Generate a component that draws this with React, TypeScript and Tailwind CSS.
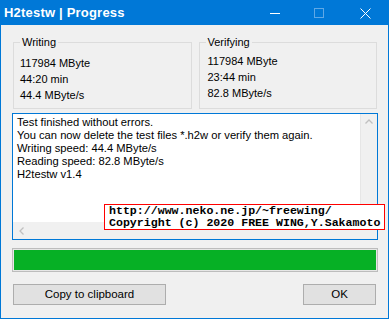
import React from "react";

const ui = { fontFamily: '"Liberation Sans", Arial, sans-serif' };
const mono = { fontFamily: '"Liberation Mono", "Courier New", monospace' };

function GroupBox({ title, lines, pad }: { title: string; lines: string[]; pad: string }) {
  return (
    <div className="relative h-[67px] w-[179px] border border-[#dcdcdc]">
      <span className="absolute left-[6px] top-[-8px] bg-[#f0f0f0] px-[2px] leading-[14px]">{title}</span>
      <div className={pad}>
        {lines.map((l) => (
          <div key={l} className="leading-[16px]">
            {l}
          </div>
        ))}
      </div>
    </div>
  );
}

export default function App() {
  return (
    <div
      className="relative flex h-[319px] w-[389px] flex-col border border-[#0078d7] bg-[#f0f0f0] text-[11px] text-black"
      style={ui}
    >
      {/* title bar */}
      <div className="flex h-[24px] shrink-0 items-center bg-[#0078d7] text-white">
        <span className="ml-[3px] text-[13px] font-bold tracking-[0.2px]">H2testw | Progress</span>
        <div className="ml-auto flex h-full items-center">
          <div className="flex h-full w-[46px] items-center justify-center pl-[4px]">
            <div className="h-px w-[10px] bg-white" />
          </div>
          <div className="flex h-full w-[46px] items-center justify-center">
            <div className="h-[10px] w-[10px] border border-[#5fa8e6]" />
          </div>
          <div className="flex h-full w-[46px] items-center justify-center">
            <svg width="11" height="11" viewBox="0 0 11 11">
              <path d="M0.5 0.5L10.5 10.5M10.5 0.5L0.5 10.5" stroke="white" strokeWidth="1" />
            </svg>
          </div>
        </div>
      </div>

      <div className="flex flex-col px-[11px]">
        {/* group boxes */}
        <div className="mt-[17px] flex gap-[7px] pl-px">
          <GroupBox title="Writing" pad="pl-[6px] pt-[12px]" lines={["117984 MByte", "44:20 min", "44.4 MByte/s"]} />
          <GroupBox title="Verifying" pad="pl-[8px] pt-[10px]" lines={["117984 MByte", "23:44 min", "82.8 MByte/s"]} />
        </div>

        {/* log box */}
        <div className="mt-[4px] flex h-[127px] w-[366px] flex-col border border-[#0078d7] bg-white">
          <div className="flex min-h-0 flex-1">
            <div className="flex-1 pl-[4px] pt-[2px] text-[11.2px] leading-[13px]">
              <div>Test finished without errors.</div>
              <div>You can now delete the test files *.h2w or verify them again.</div>
              <div>Writing speed: 44.4 MByte/s</div>
              <div>Reading speed: 82.8 MByte/s</div>
              <div>H2testw v1.4</div>
            </div>
            <div className="flex w-[17px] flex-col items-center border-l border-[#e6e6e6] bg-[#f0f0f0] pt-[5px]">
              <svg width="8" height="5" viewBox="0 0 8 5">
                <path d="M0.5 4.5L4 1L7.5 4.5" stroke="#c0c0c0" strokeWidth="1.3" fill="none" />
              </svg>
            </div>
          </div>
          <div className="flex h-[17px] items-center bg-[#f0f0f0]">
            <svg className="ml-[6px]" width="5" height="8" viewBox="0 0 5 8">
              <path d="M4.5 0.5L1 4L4.5 7.5" stroke="#c0c0c0" strokeWidth="1.3" fill="none" />
            </svg>
            <div className="ml-auto h-full w-[17px] bg-[#f0f0f0]" />
          </div>
        </div>

        {/* progress */}
        <div className="mt-[8px] h-[24px] w-[366px] border border-[#bcbcbc] bg-[#e6e6e6] p-px">
          <div className="h-full w-full bg-[#06b025]" />
        </div>

        {/* buttons */}
        <div className="mt-[12px] flex pl-px">
          <button className="h-[21px] w-[153px] border border-[#adadad] bg-[#e1e1e1] text-[11.5px]">
            Copy to clipboard
          </button>
          <button className="ml-auto mr-px h-[21px] w-[73px] border border-[#adadad] bg-[#e1e1e1] text-[11.5px]">
            OK
          </button>
        </div>
      </div>

      {/* credits overlay */}
      <div
        className="absolute left-[103px] top-[203px] h-[26px] w-[281px] whitespace-pre border border-[#ff0000] bg-white pl-[4px] text-[11.6px] font-bold leading-[12px]"
        style={mono}
      >
        <div>http://www.neko.ne.jp/~freewing/</div>
        <div>Copyright (c) 2020 FREE WING,Y.Sakamoto</div>
      </div>
    </div>
  );
}
